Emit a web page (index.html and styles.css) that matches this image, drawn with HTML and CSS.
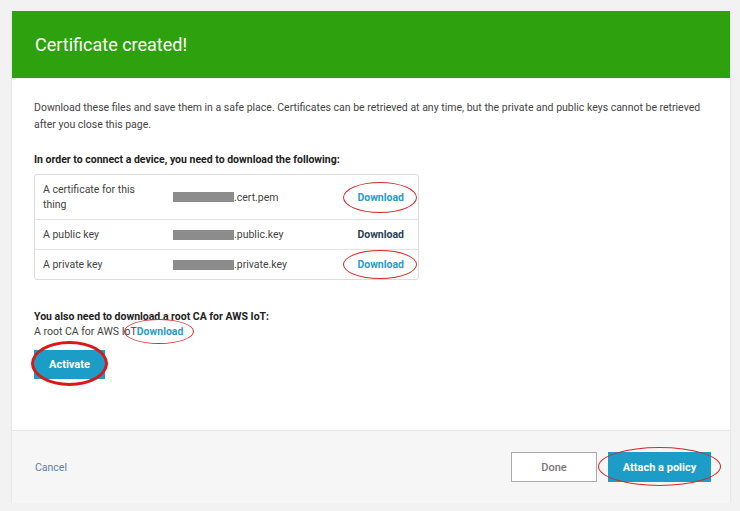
FILE: index.html
```html
<!DOCTYPE html>
<html lang="en">
<head>
    <meta charset="UTF-8">
    <meta name="viewport" content="width=device-width, initial-scale=1.0">
    <title>Certificate created</title>
    <link rel="stylesheet" href="styles.css">
</head>
<body>

    <div class="card">
        <div class="card-header">Certificate created!</div>

        <div class="card-body">
            <p class="intro">Download these files and save them in a safe place. Certificates can be retrieved at any time, but the private and public keys cannot be retrieved after you close this page.</p>

            <p class="label">In order to connect a device, you need to download the following:</p>

            <div class="files">
                <div class="file-row tall">
                    <span class="file-name">A certificate for this thing</span>
                    <span class="file-path"><span class="redacted"></span>.cert.pem</span>
                    <a class="download marked" href="#">Download<span class="ring"></span></a>
                </div>
                <div class="file-row">
                    <span class="file-name">A public key</span>
                    <span class="file-path"><span class="redacted"></span>.public.key</span>
                    <a class="download dark" href="#">Download</a>
                </div>
                <div class="file-row">
                    <span class="file-name">A private key</span>
                    <span class="file-path"><span class="redacted"></span>.private.key</span>
                    <a class="download marked" href="#">Download<span class="ring"></span></a>
                </div>
            </div>

            <p class="label root-label">You also need to download a root CA for AWS IoT:</p>
            <p class="root">A root CA for AWS IoT<a class="download marked small-ring" href="#">Download<span class="ring"></span></a></p>

            <button class="btn primary activate">Activate<span class="ring thick"></span></button>
        </div>

        <div class="card-footer">
            <a class="cancel" href="#">Cancel</a>
            <div class="actions">
                <button class="btn default">Done</button>
                <button class="btn primary attach">Attach a policy<span class="ring"></span></button>
            </div>
        </div>
    </div>

</body>
</html>
```

FILE: styles.css
```css
body {
    font-family: 'Roboto', 'Liberation Sans', sans-serif;
    background-color: #f2f2f2;
    color: #444;
    margin: 0;
    padding: 0;
}
.card {
    width: 718px;
    margin: 11px 0 0 12px;
    background-color: #fff;
    box-shadow: 0 1px 2px rgba(0, 0, 0, 0.12);
}
.card-header {
    height: 67px;
    padding-left: 23px;
    display: flex;
    align-items: center;
    background-color: #2da10e;
    color: #fff;
    font-size: 18px;
}
.card-body {
    padding: 21px 22px 51px 22px;
}
p {
    margin: 0;
    font-size: 10.5px;
    line-height: 17px;
}
.intro {
    color: #444;
}
.label {
    margin-top: 18px;
    font-weight: bold;
    color: #222;
}
.files {
    margin-top: 6px;
    width: 383px;
    border: 1px solid #dcdcdc;
    border-radius: 3px;
}
.file-row {
    display: flex;
    align-items: center;
    height: 29px;
    padding: 0 14px 0 8px;
    border-top: 1px solid #e3e3e3;
    font-size: 10.5px;
}
.file-row:first-child {
    border-top: none;
}
.file-row.tall {
    height: 44px;
    line-height: 15px;
}
.file-name {
    width: 130px;
    padding-right: 32px;
    box-sizing: border-box;
}
.file-path {
    flex: 1;
    display: flex;
    align-items: center;
}
.redacted {
    display: inline-block;
    width: 61px;
    height: 10px;
    background-color: #8c8c8c;
}
.download {
    position: relative;
    font-weight: bold;
    color: #2b9bc8;
    text-decoration: none;
}
.download.dark {
    color: #2c4456;
}
.ring {
    position: absolute;
    left: -14px;
    right: -13px;
    top: -8px;
    bottom: -8px;
    border: 1px solid #d42a2a;
    border-radius: 50%;
    pointer-events: none;
}
.root-label {
    margin-top: 29px;
    line-height: 15px;
}
.root {
    line-height: 15px;
}
.small-ring .ring {
    left: -13px;
    right: -11px;
    top: -6px;
    bottom: -6px;
}
.btn {
    position: relative;
    font-family: 'Roboto', 'Liberation Sans', sans-serif;
    font-size: 11px;
    font-weight: bold;
    height: 30px;
    border-radius: 0;
    cursor: pointer;
}
.btn.primary {
    background-color: #1b9dc8;
    border: 1px solid #1b9dc8;
    color: #fff;
}
.btn.default {
    width: 86px;
    background-color: #fff;
    border: 1px solid #aaa;
    color: #777;
    font-weight: 500;
}
.activate {
    margin-top: 11px;
    width: 71px;
    height: 29px;
    display: block;
}
.activate .ring {
    left: -4px;
    right: -4px;
    top: -10px;
    bottom: -8px;
}
.ring.thick {
    border-width: 3px;
    border-color: #d91818;
}
.card-footer {
    height: 72px;
    display: flex;
    align-items: center;
    justify-content: space-between;
    padding: 0 19px 0 23px;
    border-top: 1px solid #e6e6e6;
    background-color: #f6f6f6;
}
.cancel {
    font-size: 10.5px;
    color: #5b7fa6;
    text-decoration: none;
}
.actions {
    display: flex;
    gap: 11px;
}
.attach {
    width: 103px;
}
.attach .ring {
    left: -11px;
    right: -11px;
    top: -6px;
    bottom: -5px;
}
```
